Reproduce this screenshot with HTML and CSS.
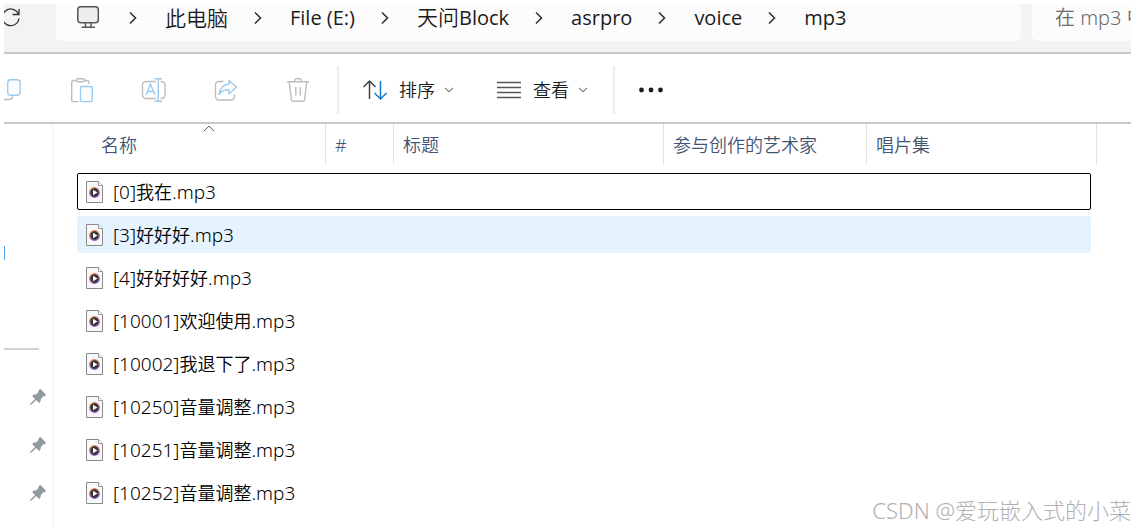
FILE: index.html
```html
<!DOCTYPE html>
<html lang="zh-CN">
<head>
<meta charset="utf-8">
<title>mp3</title>
<link rel="stylesheet" href="styles.css">
</head>
<body>
<svg class="defs" width="0" height="0" aria-hidden="true">
  <defs>
    <linearGradient id="ring" x1="0" y1="0" x2="0.3" y2="1">
      <stop offset="0" stop-color="#f0803c"/>
      <stop offset="0.5" stop-color="#c98a80"/>
      <stop offset="1" stop-color="#9a5fc0"/>
    </linearGradient>
    <symbol id="chevron" viewBox="0 0 8 14"><path d="M1 1.500l5.500 5.500L1 12.500" fill="none" stroke="#333" stroke-width="1.6"/></symbol>
    <symbol id="down" viewBox="0 0 10 6"><path d="M1 .8l4 4 4-4" fill="none" stroke="#777" stroke-width="1.1"/></symbol>
    <symbol id="media" viewBox="0 0 17 22">
      <path d="M.5.5h12l4 4v17H.5z" fill="#f7f8fa" stroke="#8a8a8a"/>
      <path d="M12.500.5v4h4" fill="#fff" stroke="#9a9a9a"/>
      <circle cx="8.500" cy="11.500" r="4.800" fill="#303236" stroke="url(#ring)" stroke-width="1.300"/>
      <path d="M7 8.700l4.500 2.800-4.500 2.800z" fill="#fff"/>
    </symbol>
    <symbol id="pin" viewBox="0 0 16 16"><path d="M9.500.2Q10.200-.2 11 .5L15.600 5.200Q16.300 6.200 15.200 6.700L12.600 7.900 11.200 9.400 10.200 13Q9.600 14.200 8.600 13.400L6.100 11 1.200 15.700 0 16 .3 14.800 5 9.900 2.600 7.500Q1.900 6.400 3 6L6.600 5 8 3.500z" fill="#8f9ba1"/></symbol>
  </defs>
</svg>
<div class="window">
  <header class="address-row">
    <button class="refresh" aria-label="刷新"><svg width="20" height="20" viewBox="0 0 20 20"><path d="M18.600 7.500A8.300 8.300 0 1 0 19 11.500M19 2v5.500h-6.500" fill="none" stroke="#333" stroke-width="1.300"/></svg></button>
    <nav class="address" aria-label="地址">
      <svg width="24" height="24" viewBox="0 0 24 24"><rect x="1.800" y=".8" width="20.500" height="16" rx="3" fill="#eee" stroke="#555" stroke-width="1.500"/><path d="M9.500 17v4M15 17v4M5.500 21.300h13.500" fill="none" stroke="#555" stroke-width="1.500"/></svg>
      <ol class="crumbs">
        <li><svg width="8" height="14"><use href="#chevron"/></svg><a href="#">此电脑</a></li>
        <li><svg width="8" height="14"><use href="#chevron"/></svg><a href="#" class="latin">File (E:)</a></li>
        <li><svg width="8" height="14"><use href="#chevron"/></svg><a href="#">天问<span class="latin">Block</span></a></li>
        <li><svg width="8" height="14"><use href="#chevron"/></svg><a href="#" class="latin">asrpro</a></li>
        <li><svg width="8" height="14"><use href="#chevron"/></svg><a href="#" class="latin">voice</a></li>
        <li><svg width="8" height="14"><use href="#chevron"/></svg><a href="#" class="latin">mp3</a></li>
      </ol>
    </nav>
    <input class="search" type="text" placeholder="在 mp3 中搜索" aria-label="搜索">
  </header>
  <div class="toolbar" role="toolbar" aria-label="命令">
    <div class="edit-tools">
      <button disabled aria-label="复制"><svg width="26" height="26" viewBox="0 0 26 26" fill="none" stroke-width="1.400"><path d="M7.500 7H4a3 3 0 0 0-3 3v9a3 3 0 0 0 3 3.500h8q3 0 4-3" stroke="#bdbdbd"/><rect x="10.700" y="2.700" width="12.500" height="15.500" rx="3" stroke="#9ccbee" fill="#fafcfe"/></svg></button>
      <button disabled aria-label="粘贴"><svg width="26" height="26" viewBox="0 0 26 26" fill="none" stroke-width="1.400"><path d="M8 3.500H4.500a1.800 1.800 0 0 0-1.800 1.800v17.500A1.800 1.800 0 0 0 4.500 24.600H9.500M15 3.500h3a1.800 1.800 0 0 1 1.800 1.800V7" stroke="#bdbdbd"/><rect x="7.500" y="1.700" width="8" height="3" rx="1.500" stroke="#bdbdbd"/><rect x="11.500" y="9.500" width="11.800" height="15.100" rx="1.500" stroke="#9ccbee" fill="#fafcfe"/></svg></button>
      <button disabled aria-label="重命名"><svg width="26" height="26" viewBox="0 0 26 26" fill="none" stroke-width="1.400"><path d="M15 4.500H5a3.500 3.500 0 0 0-3.500 3.500v10A3.500 3.500 0 0 0 5 21.500h10M19.500 4.500h1a3.500 3.500 0 0 1 3.500 3.500v10a3.500 3.500 0 0 1-3.500 3.500h-1" stroke="#bdbdbd"/><path d="M13.500 1.700h7.500M13.500 24.300h7.500M17.300 1.700v22.600M5 18l4.500-11 4.500 11M6.500 14.500h6" stroke="#9ccbee"/></svg></button>
      <button disabled aria-label="共享"><svg width="26" height="26" viewBox="0 0 26 26" fill="none" stroke-width="1.400" stroke-linejoin="round"><path d="M10.500 4.500H6A3.500 3.500 0 0 0 2.500 8v11.500A3.500 3.500 0 0 0 6 23h12a3.500 3.500 0 0 0 3.500-3.500V17" stroke="#bdbdbd"/><path d="M16 3.500l7.500 6.700-7.500 6.500V12.800Q9.500 12.500 6 17.500 7.500 7.500 16 7.300z" stroke="#9ccbee"/></svg></button>
      <button disabled aria-label="删除"><svg width="26" height="26" viewBox="0 0 26 26" fill="none" stroke="#bdbdbd" stroke-width="1.400"><path d="M2 4.700h22M9.500 4.500a3.500 3 0 0 1 7 0M4.300 5l2 17.500a2 2 0 0 0 2 1.800h9.400a2 2 0 0 0 2-1.800l2-17.500M10.800 10v8.500M15.200 10v8.500"/></svg></button>
    </div>
    <div class="view-tools">
      <button><svg width="26" height="24" viewBox="0 0 26 24" fill="none" stroke-width="1.500"><path d="M7.500 21V3M1.500 9l6-6 6 6" stroke="#444"/><path d="M18.500 3v18M12.500 15l6 6 6-6" stroke="#0f78d4"/></svg><span>排序</span><svg width="10" height="6"><use href="#down"/></svg></button>
      <button><svg width="26" height="24" viewBox="0 0 26 24"><path d="M1 4.500h24M1 9.500h24M1 14.500h24M1 19.500h24" stroke="#555" stroke-width="1.300"/></svg><span>查看</span><svg width="10" height="6"><use href="#down"/></svg></button>
    </div>
    <button class="more" aria-label="更多"><svg width="26" height="6" viewBox="0 0 26 6" fill="#1b1b1b"><circle cx="3.500" cy="3" r="2.400"/><circle cx="13" cy="3" r="2.400"/><circle cx="22.500" cy="3" r="2.400"/></svg></button>
  </div>
  <div class="body">
    <aside class="sidebar">
      <span class="marker"></span>
      <hr>
      <ul>
        <li><svg width="16" height="16"><use href="#pin"/></svg></li>
        <li><svg width="16" height="16"><use href="#pin"/></svg></li>
        <li><svg width="16" height="16"><use href="#pin"/></svg></li>
      </ul>
    </aside>
    <main>
      <table>
        <thead>
          <tr><th class="sorted" scope="col">名称<svg class="sort-mark" width="12" height="7" viewBox="0 0 12 7"><path d="M.8 6.300L6 1.100l5.200 5.200" fill="none" stroke="#555"/></svg></th><th scope="col">#</th><th scope="col">标题</th><th scope="col">参与创作的艺术家</th><th scope="col">唱片集</th></tr>
        </thead>
        <tbody>
          <tr class="focused"><td><svg width="17" height="22"><use href="#media"/></svg><span>[0]<span class="cjk">我在</span>.mp3</span></td></tr>
          <tr class="hovered"><td><svg width="17" height="22"><use href="#media"/></svg><span>[3]<span class="cjk">好好好</span>.mp3</span></td></tr>
          <tr><td><svg width="17" height="22"><use href="#media"/></svg><span>[4]<span class="cjk">好好好好</span>.mp3</span></td></tr>
          <tr><td><svg width="17" height="22"><use href="#media"/></svg><span>[10001]<span class="cjk">欢迎使用</span>.mp3</span></td></tr>
          <tr><td><svg width="17" height="22"><use href="#media"/></svg><span>[10002]<span class="cjk">我退下了</span>.mp3</span></td></tr>
          <tr><td><svg width="17" height="22"><use href="#media"/></svg><span>[10250]<span class="cjk">音量调整</span>.mp3</span></td></tr>
          <tr><td><svg width="17" height="22"><use href="#media"/></svg><span>[10251]<span class="cjk">音量调整</span>.mp3</span></td></tr>
          <tr><td><svg width="17" height="22"><use href="#media"/></svg><span>[10252]<span class="cjk">音量调整</span>.mp3</span></td></tr>
        </tbody>
      </table>
    </main>
  </div>
  <p class="watermark">CSDN @爱玩嵌入式的小菜</p>
</div>
</body>
</html>
```
FILE: styles.css
```css
* { box-sizing: border-box; }

body {
  margin: 0;
  padding: 4px;
  background: #fff;
  color: #1b1b1b;
  font-family: "Noto Sans", "Noto Sans CJK SC", sans-serif;
  font-size: 18px;
  font-weight: 350;
  line-height: 24px;
}

button, input { font: inherit; color: inherit; border: 0; background: none; padding: 0; }
ol, ul { list-style: none; margin: 0; padding: 0; }
svg { display: block; flex: none; }
.defs { position: absolute; }

.window {
  position: relative;
  display: flex;
  flex-direction: column;
  min-height: calc(100vh - 8px);
  overflow: hidden;
}

.address-row {
  display: flex;
  height: 50px;
  padding-bottom: 11px;
  background: #f3f3f3;
  border-bottom: 2px solid #c8c8c8;
  overflow: hidden;
}
.refresh { width: 52px; display: flex; padding-top: 3px; }
.refresh svg { margin-left: -4px; }
.address {
  flex: 1;
  display: flex;
  align-items: center;
  padding: 0 0 10px 20px;
  background: #fcfcfc;
  border-radius: 0 0 6px 6px;
  font-size: 21px;
}
.crumbs { display: flex; padding-left: 29px; gap: 26px; }
.crumbs li { display: flex; align-items: center; gap: 28px; white-space: nowrap; }
.crumbs a { color: inherit; text-decoration: none; }
.latin { font-family: "Open Sans", sans-serif; font-size: 20px; font-weight: 400; }
.search {
  width: 99px;
  margin-left: 11px;
  padding: 0 0 10px 23px;
  background: #fcfcfc;
  border-radius: 0 0 0 6px;
  font-size: 20px;
}
.search::placeholder { color: #6b6b6b; opacity: 1; }

.toolbar {
  display: flex;
  align-items: center;
  height: 70px;
  padding-top: 4px;
  border-bottom: 2px solid #c8c8c8;
}
.edit-tools, .view-tools { display: flex; align-items: center; }
.edit-tools { margin-left: -30px; }
.edit-tools button { display: flex; justify-content: center; width: 72px; }
.view-tools {
  height: 48px;
  margin-left: 3px;
  padding: 0 25px 0 23px;
  gap: 42px;
  border-left: 2px solid #ededed;
  border-right: 2px solid #ededed;
}
.view-tools button { display: flex; align-items: center; }
.view-tools span { margin: 0 9px 0 11px; }
.more { padding: 0 23px; }

.body { flex: 1; display: flex; }
.sidebar { width: 50px; border-right: 2px solid #f7f7f7; }
.marker { display: block; width: 1px; height: 14px; margin-top: 122px; background: #4da3f0; }
.sidebar hr { width: 35px; height: 2px; margin: 88px 0 39px; border: 0; background: #d2d2d2; }
.sidebar ul { display: grid; gap: 32px; padding-left: 26px; }

main { flex: 1; padding: 0 34px 0 23px; }
table, thead, tbody { display: block; }
thead tr { display: grid; grid-template-columns: 249px 68px 270px 203px 1fr; }
th {
  height: 40px;
  padding: 9px 0 0 9px;
  border-right: 1px solid #e2e2e2;
  color: #3f5573;
  font-weight: inherit;
  text-align: left;
  white-space: nowrap;
}
th.sorted { position: relative; padding-left: 24px; }
.sort-mark { position: absolute; top: 1px; left: 126px; }
tbody { display: grid; gap: 6px; padding: 9px 6px 0 0; color: #000; font-size: 19px; }
tbody tr { display: flex; height: 37px; border: 1px solid transparent; border-radius: 2px; }
tbody td { display: flex; align-items: center; gap: 10px; padding: 0 0 0 8px; white-space: nowrap; }
.cjk { font-size: 18px; }
tr.focused { border-color: #000; }
tr.hovered { background: #e5f3ff; }

.watermark {
  position: absolute;
  right: 0;
  bottom: 0;
  margin: 0;
  color: #b0b0b0;
  font-size: 22px;
  font-weight: 300;
  line-height: 34px;
  white-space: nowrap;
}
```
